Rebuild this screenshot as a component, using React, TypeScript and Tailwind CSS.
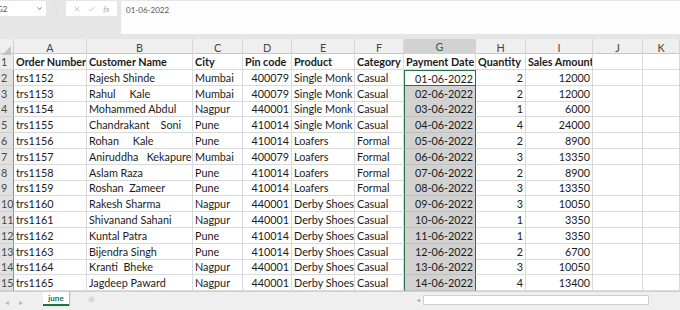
import { ChevronDown, Check, X } from "lucide-react";

const cols = ["A", "B", "C", "D", "E", "F", "G", "H", "I", "J", "K"];

// [order, customer, city, pin, product, category, date, qty, amount]
const rows: string[][] = [
  ["trs1152", "Rajesh Shinde", "Mumbai", "400079", "Single Monk", "Casual", "01-06-2022", "2", "12000"],
  ["trs1153", "Rahul     Kale", "Mumbai", "400079", "Single Monk", "Casual", "02-06-2022", "2", "12000"],
  ["trs1154", "Mohammed Abdul", "Nagpur", "440001", "Single Monk", "Casual", "03-06-2022", "1", "6000"],
  ["trs1155", "Chandrakant    Soni", "Pune", "410014", "Single Monk", "Casual", "04-06-2022", "4", "24000"],
  ["trs1156", "Rohan     Kale", "Pune", "410014", "Loafers", "Formal", "05-06-2022", "2", "8900"],
  ["trs1157", "Aniruddha   Kekapure", "Mumbai", "400079", "Loafers", "Formal", "06-06-2022", "3", "13350"],
  ["trs1158", "Aslam Raza", "Pune", "410014", "Loafers", "Formal", "07-06-2022", "2", "8900"],
  ["trs1159", "Roshan  Zameer", "Pune", "410014", "Loafers", "Formal", "08-06-2022", "3", "13350"],
  ["trs1160", "Rakesh Sharma", "Nagpur", "440001", "Derby Shoes", "Casual", "09-06-2022", "3", "10050"],
  ["trs1161", "Shivanand Sahani", "Nagpur", "440001", "Derby Shoes", "Casual", "10-06-2022", "1", "3350"],
  ["trs1162", "Kuntal Patra", "Pune", "410014", "Derby Shoes", "Casual", "11-06-2022", "1", "3350"],
  ["trs1163", "Bijendra Singh", "Pune", "410014", "Derby Shoes", "Casual", "12-06-2022", "2", "6700"],
  ["trs1164", "Kranti  Bheke", "Nagpur", "440001", "Derby Shoes", "Casual", "13-06-2022", "3", "10050"],
  ["trs1165", "Jagdeep Paward", "Nagpur", "440001", "Derby Shoes", "Casual", "14-06-2022", "4", "13400"],
];

const headers = ["Order Number", "Customer Name", "City", "Pin code", "Product", "Category", "Payment Date", "Quantity", "Sales Amount"];

// columns whose values sit on the right edge
const rightAligned = [3, 6, 7, 8];

const gridCols =
  "grid grid-cols-[14px_73px_106px_50px_49px_63px_49px_72px_50px_67px_50px_1fr]";

function Cell({ text, bold }: { text?: string; bold?: boolean }) {
  return (
    <div
      className={`h-full overflow-hidden whitespace-pre border-r border-b border-[#dadada] bg-white px-[2px] leading-[15px] ${
        bold ? "font-bold" : ""
      }`}
    >
      {text}
    </div>
  );
}

export default function App() {
  return (
    <div className="w-[680px] h-[310px] overflow-hidden bg-[#e6e6e6] text-[10.8px] text-[#1b1b1b] font-['Lato','Liberation_Sans',sans-serif]">
      {/* Formula bar */}
      <div className="flex h-[39px] gap-[4px] pt-[1px] text-[8px] text-[#555]">
        <div className="flex h-[15px] w-[46px] items-center justify-between bg-white pr-[3px]">
          <span className="-ml-[3px]">G2</span>
          <ChevronDown size={7} strokeWidth={3} className="text-[#666]" />
        </div>
        <div className="flex h-[15px] w-[12px] items-center justify-center text-[#bbb]">⋮</div>
        <div className="flex h-[15px] w-[51px] items-center justify-around bg-white px-[4px] text-[#aaa]">
          <X size={8} />
          <Check size={8} />
          <span className="italic">fx</span>
        </div>
        <div className="flex h-[33px] flex-1 items-start bg-[#fdfdfd] pl-[5px] pt-[3px]">01-06-2022</div>
      </div>

      {/* Column headers */}
      <div className={`${gridCols} h-[15px] bg-[#efefef] text-[#444] border-b border-[#c8c8c8]`}>
        <div className="relative border-r border-[#cfcfcf]">
          <div className="absolute bottom-[2px] right-[2px] h-0 w-0 border-l-[9px] border-t-[9px] border-l-transparent border-t-transparent border-r-[0px] border-b-[0px] [border-right:9px_solid_#c4c4c4]" />
        </div>
        {cols.map((c) => (
          <div
            key={c}
            className={`flex items-center justify-center border-r border-[#d6d6d6] ${
              c === "G" ? "bg-[#d2d2d2] text-[#2e5e40] border-b-2 border-b-[#217346]" : ""
            }`}
          >
            {c}
          </div>
        ))}
      </div>

      {/* Sheet rows */}
      <div className="bg-white">
        <div className={`${gridCols} h-[15.8px]`}>
          <div className="border-r border-[#bdbdbd] border-b border-b-[#dadada] bg-[#ececec] pl-[1px] leading-[15px] text-[#444]">1</div>
          {headers.map((h) => (
            <Cell key={h} text={h} bold />
          ))}
          <Cell />
          <Cell />
        </div>
        {rows.map((r, i) => (
          <div key={r[0]} className={`${gridCols} h-[15.8px]`}>
            <div className="border-r border-[#7a9c85] border-b border-b-[#cfcfcf] bg-[#e1e1e1] pl-[1px] leading-[15px] text-[#3d4f43]">
              {i + 2}
            </div>
            {r.map((v, j) => {
              const isG = j === 6;
              return (
                <div
                  key={j}
                  className={`h-full overflow-hidden whitespace-pre px-[2px] leading-[15px] ${
                    rightAligned.includes(j) ? "text-right" : "text-left"
                  } ${
                    isG
                      ? `border-x border-[#217346] ${i === 0 ? "bg-white border-t border-b" : "bg-[#d2d2d2] border-b-[#c0c0c0] border-b"} ${
                          i === rows.length - 1 ? "border-b-[#217346]" : ""
                        }`
                      : "border-r border-b border-[#dadada]"
                  }`}
                >
                  {v}
                </div>
              );
            })}
            <Cell />
            <Cell />
          </div>
        ))}
      </div>

      {/* Sheet tabs */}
      <div className="flex h-[19px] items-start border-t border-[#d0d0d0] bg-[#efefef] text-[8px]">
        <div className="flex w-[43px] items-center gap-[10px] pl-[5px] pt-[4px] text-[#bbb]">
          <span>◂</span>
          <span>▸</span>
        </div>
        <div className="flex h-[14px] w-[26px] items-center justify-center border-b-2 border-[#217346] bg-white font-bold text-[#217346] shadow-[1px_0_1px_#bbb]">
          june
        </div>
        <div className="ml-[16px] flex h-[14px] w-[12px] items-center justify-center text-[#c2c2c2]">⊕</div>
        <div className="ml-[320px] mt-[3px] flex h-[10px] w-[6px] items-center text-[6px] text-[#999]">◂</div>
        <div className="mt-[3px] h-[10px] w-[226px] border border-[#cfcfcf] bg-white" />
      </div>
    </div>
  );
}
